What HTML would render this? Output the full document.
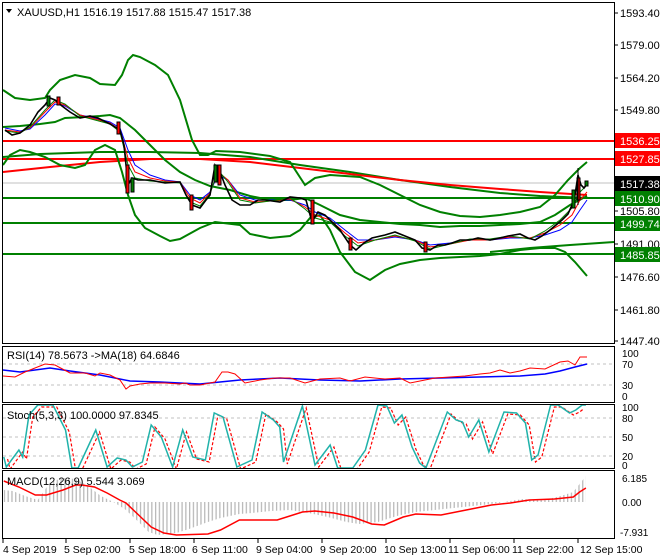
<!DOCTYPE html>
<html><head><meta charset="utf-8"><style>
html,body{margin:0;padding:0;background:#fff;}
svg{display:block;font-family:"Liberation Sans",sans-serif;font-size:11px;}
</style></head><body>
<svg width="660" height="560" viewBox="0 0 660 560" xmlns="http://www.w3.org/2000/svg">
<defs>
<pattern id="hist" width="3" height="10" patternUnits="userSpaceOnUse"><rect x="0" y="0" width="1" height="10" fill="#b8b8b8"/></pattern>
</defs>
<rect width="660" height="560" fill="#fff"/>
<!-- main panel -->
<g fill="none">
<!-- grey current price line -->
<line x1="3" y1="183" x2="614" y2="183" stroke="#c0c0c0" stroke-width="1"/>
<!-- horizontal levels -->
<line x1="3" y1="141" x2="614" y2="141" stroke="#ff0000" stroke-width="2"/>
<line x1="3" y1="159" x2="614" y2="159" stroke="#ff0000" stroke-width="2"/>
<line x1="3" y1="198" x2="614" y2="198" stroke="#008000" stroke-width="2"/>
<line x1="3" y1="223" x2="614" y2="223" stroke="#008000" stroke-width="2"/>
<line x1="3" y1="254" x2="614" y2="254" stroke="#008000" stroke-width="2"/>
<!-- trend line -->
<polyline points="490,252 530,248 570,245 614,242" stroke="#008000" stroke-width="2"/>
<!-- slow green MA -->
<polyline points="3,157 40,154 100,152 150,152 200,153 250,157 300,165 350,172 400,180 450,187 500,193 540,196 587,198" stroke="#008000" stroke-width="2"/>
<!-- slow red MA -->
<polyline points="3,172 50,167 100,162 150,159 200,159 250,162 300,168 350,174 400,180 450,185 500,189 540,192 587,195" stroke="#ff0000" stroke-width="2"/>
<!-- upper band -->
<polyline points="3,90 15,98 30,100 45,98 50,90 60,80 75,75 90,78 100,84 115,85 122,75 128,60 133,55 140,57 155,65 168,75 180,100 192,140 200,155 208,155 216,151 240,152 270,156 290,162 305,185 315,178 330,175 360,177 380,185 400,195 420,205 440,212 460,216 480,217 500,215 520,212 540,207 555,195 568,180 580,168 587,162" stroke="#008000" stroke-width="2"/>
<!-- middle band -->
<polyline points="3,127 20,126 40,124 55,122 65,118 85,117 100,116 110,115 120,118 135,130 150,145 165,160 180,172 195,180 210,186 230,190 250,196 270,200 290,200 305,198 320,205 340,215 360,220 380,222 400,224 420,225 440,227 460,226 480,226 500,225 520,224 540,222 555,215 570,205 587,196" stroke="#008000" stroke-width="2"/>
<!-- lower band -->
<polyline points="3,165 10,155 20,150 30,152 45,157 60,165 75,168 85,165 95,150 105,145 115,150 122,172 128,195 135,215 145,228 160,236 170,241 180,239 200,228 215,222 240,225 250,234 270,238 290,236 300,230 310,218 320,215 330,230 340,252 355,272 370,280 385,270 400,264 420,260 440,258 460,257 480,256 500,254 520,250 540,248 555,248 565,252 575,262 587,276" stroke="#008000" stroke-width="2"/>
<!-- small MAs -->
<polyline points="5,128 20,131 30,129 45,115 55,104 65,106 80,115 95,118 110,122 120,128 128,150 135,165 150,175 165,180 180,182 190,195 200,200 210,192 218,175 228,180 240,195 255,200 270,200 290,200 305,205 315,212 330,218 345,230 358,240 375,240 395,237 415,240 430,245 450,243 470,240 490,240 510,238 530,238 545,235 560,230 572,222 580,210 587,200" stroke="#0000ff" stroke-width="1"/>
<polyline points="5,130 20,132 30,128 45,112 55,102 65,105 80,115 95,119 110,123 120,130 128,158 135,172 150,178 165,181 180,182 190,198 200,203 210,193 218,172 228,180 240,198 255,202 270,201 290,199 305,207 315,215 330,220 345,233 358,243 375,240 395,236 415,240 430,247 450,244 470,240 490,240 510,237 530,238 545,233 560,225 572,215 580,200 587,192" stroke="#ff0000" stroke-width="1"/>
<polyline points="5,131 20,133 30,127 45,110 55,100 65,104 80,116 95,120 110,124 120,132 128,165 135,178 150,181 165,182 180,183 190,202 200,206 210,194 218,170 228,182 240,200 255,203 270,201 290,198 305,209 315,218 330,222 345,236 358,246 375,240 395,235 415,241 430,249 450,244 470,239 490,239 510,236 530,239 545,231 560,220 572,208 580,192 587,185" stroke="#008000" stroke-width="1"/>
<!-- price -->
<polyline points="5,130 12,135 20,133 30,125 38,112 45,105 50,98 55,100 62,106 70,112 80,118 90,116 98,118 110,124 120,130 124,145 128,185 132,178 138,180 150,180 165,183 180,182 186,195 192,205 200,208 206,200 210,195 215,165 220,172 225,185 232,200 240,205 250,205 258,200 265,200 280,202 290,197 300,198 306,200 312,222 318,212 325,215 335,225 340,230 350,245 356,250 364,243 372,238 385,235 395,232 405,236 415,240 422,248 430,250 438,245 445,245 452,243 460,240 470,240 478,238 490,240 500,238 508,236 520,234 528,238 535,240 542,236 550,230 556,225 562,220 568,214 572,205 575,195 578,175 581,185 584,188 587,184" stroke="#000" stroke-width="1.6"/>
<!-- a few candle bodies -->
<g stroke="#000" stroke-width="1">
<rect x="47" y="96" width="3" height="10" fill="#008000"/>
<rect x="57" y="97" width="3" height="8" fill="#ff0000"/>
<rect x="117" y="122" width="3" height="12" fill="#ff0000"/>
<rect x="126" y="165" width="3" height="28" fill="#ff0000"/>
<rect x="131" y="178" width="3" height="14" fill="#008000"/>
<rect x="190" y="195" width="3" height="15" fill="#ff0000"/>
<rect x="214" y="165" width="3" height="17" fill="#008000"/>
<rect x="218" y="165" width="3" height="20" fill="#ff0000"/>
<rect x="311" y="200" width="3" height="24" fill="#ff0000"/>
<rect x="349" y="238" width="3" height="12" fill="#ff0000"/>
<rect x="424" y="242" width="3" height="10" fill="#ff0000"/>
<rect x="572" y="190" width="3" height="18" fill="#008000"/>
<rect x="577" y="178" width="3" height="22" fill="#ff0000"/>
<rect x="585" y="181" width="3" height="5" fill="#008000"/>
</g>
<line x1="578" y1="168" x2="578" y2="205" stroke="#000"/>
</g>
<rect x="2.5" y="2.5" width="612" height="341" fill="none" stroke="#000"/>
<text x="17" y="16" fill="#000">XAUUSD,H1  1516.19 1517.88 1515.47 1517.38</text>
<polygon points="6,9 12,9 9,13" fill="#000"/>

<!-- price axis -->
<g fill="#000">
<text x="620" y="17">1593.40</text><text x="620" y="49">1579.00</text><text x="620" y="82">1564.20</text><text x="620" y="114">1549.80</text>
<text x="620" y="204" visibility="hidden">x</text>
<text x="620" y="215">1505.80</text><text x="620" y="248">1491.00</text><text x="620" y="281">1476.60</text><text x="620" y="314">1461.80</text><text x="620" y="345">1447.40</text>
</g>
<g stroke="#000"><line x1="614" y1="13" x2="618" y2="13"/><line x1="614" y1="45" x2="618" y2="45"/><line x1="614" y1="78" x2="618" y2="78"/><line x1="614" y1="110" x2="618" y2="110"/><line x1="614" y1="211" x2="618" y2="211"/><line x1="614" y1="244" x2="618" y2="244"/><line x1="614" y1="277" x2="618" y2="277"/><line x1="614" y1="310" x2="618" y2="310"/><line x1="614" y1="341" x2="618" y2="341"/></g>
<rect x="615" y="133" width="45" height="15" fill="#ff0000"/><text x="620" y="145" fill="#fff">1536.25</text>
<rect x="615" y="151" width="45" height="15" fill="#ff0000"/><text x="620" y="163" fill="#fff">1527.85</text>
<rect x="615" y="176" width="45" height="15" fill="#000"/><text x="620" y="188" fill="#fff">1517.38</text>
<rect x="615" y="191" width="45" height="15" fill="#008000"/><text x="620" y="203" fill="#fff">1510.90</text>
<rect x="615" y="216" width="45" height="15" fill="#008000"/><text x="620" y="228" fill="#fff">1499.74</text>
<rect x="615" y="247" width="45" height="15" fill="#008000"/><text x="620" y="259" fill="#fff">1485.85</text>

<!-- RSI panel -->
<g fill="none" stroke="#c0c0c0" stroke-dasharray="3,3"><line x1="3" y1="364" x2="614" y2="364"/><line x1="3" y1="385" x2="614" y2="385"/></g>
<polyline fill="none" stroke="#0000ff" stroke-width="1.5" points="3,370 20,372 50,368 70,371 100,375 130,381 160,382 200,384 240,380 280,378 320,380 360,381 400,379 440,378 480,377 520,376 545,374 560,371 575,367 587,364"/>
<polyline fill="none" stroke="#ff0000" stroke-width="1" points="3,376 15,377 25,372 35,368 45,364 55,365 70,373 85,373 95,376 100,373 110,375 120,380 126,389 130,386 140,384 150,383 165,383 180,384 185,383 190,385 200,385 215,382 222,372 228,372 235,374 245,383 260,380 275,378 290,378 305,383 320,379 340,378 350,381 365,377 385,379 400,378 410,383 420,381 435,378 450,377 465,376 480,374 490,373 500,370 510,373 520,371 530,368 545,369 560,362 568,361 575,365 580,357 587,357"/>
<rect x="2.5" y="346.5" width="612" height="56" fill="none" stroke="#000"/>
<text x="7" y="359">RSI(14) 78.5673  -&gt;MA(18) 64.6846</text>
<g font-size="10"><text x="622" y="357">100</text><text x="622" y="368">70</text><text x="622" y="389">30</text><text x="622" y="400">0</text></g>

<!-- Stoch panel -->
<g fill="none" stroke="#c0c0c0" stroke-dasharray="3,3"><line x1="3" y1="418" x2="614" y2="418"/><line x1="3" y1="437" x2="614" y2="437"/><line x1="3" y1="456" x2="614" y2="456"/></g>
<g transform="scale(1.26,1)">
<polyline fill="none" stroke="#ff0000" stroke-width="1.2" stroke-dasharray="3,2" vector-effect="non-scaling-stroke" transform="translate(3,2)" points="3,457 5,467 15,450 18,457 23,415 30,405 42,405 52,430 57,468 62,468 76,430 85,467 93,458 100,460 105,467 113,462 120,425 128,437 137,467 145,430 153,457 163,460 170,413 177,417 188,467 200,460 208,412 217,420 222,427 225,462 240,406 250,465 262,445 268,468 280,468 290,450 300,405 307,406 313,423 319,415 327,447 333,463 338,468 355,412 362,420 367,422 372,437 380,420 388,452 400,412 410,413 417,423 422,460 427,455 437,405 443,405 452,413 457,410 460,407"/>
<polyline fill="none" stroke="#20b2aa" stroke-width="1.5" vector-effect="non-scaling-stroke" points="3,457 5,467 15,450 18,457 23,415 30,405 42,405 52,430 57,468 62,468 76,430 85,467 93,458 100,460 105,467 113,462 120,425 128,437 137,467 145,430 153,457 163,460 170,413 177,417 188,467 200,460 208,412 217,420 222,427 225,462 240,406 250,465 262,445 268,468 280,468 290,450 300,405 307,406 313,423 319,415 327,447 333,463 338,468 355,412 362,420 367,422 372,437 380,420 388,452 400,412 410,413 417,423 422,460 427,455 437,405 443,405 452,413 457,410 462,405 465,405"/>
</g>
<rect x="0" y="469" width="614" height="1" fill="#fff"/>
<rect x="2.5" y="404.5" width="612" height="64" fill="none" stroke="#000"/>
<text x="7" y="419">Stoch(5,3,3) 100.0000 97.8345</text>
<g font-size="10"><text x="622" y="411">100</text><text x="622" y="422">80</text><text x="622" y="441">50</text><text x="622" y="460">20</text><text x="622" y="469">0</text></g>

<!-- MACD panel -->
<g transform="scale(1.26,1)">
<polygon fill="url(#hist)" points="3,490 10,491 20,496 30,500 40,482 50,478 60,479 70,486 80,496 90,502 100,510 110,522 118,532 125,535 140,533 150,529 165,522 175,518 190,514 200,513 215,511 230,510 245,513 260,517 275,522 285,524 300,522 315,516 330,512 345,510 360,508 375,506 390,504 405,501 415,499 425,500 435,499 445,496 455,492 460,484 465,476 465,502 3,502"/>
<polyline fill="none" stroke="#ff0000" stroke-width="1.5" vector-effect="non-scaling-stroke" points="3,481 15,487 28,495 37,495 50,490 60,485 65,485 75,487 85,493 95,500 100,503 110,515 120,527 130,533 140,535 165,534 175,530 190,520 200,520 220,520 240,512 250,511 265,513 280,517 295,524 305,525 320,517 330,514 350,515 370,510 390,505 405,503 420,500 440,499 455,497 460,492 465,488"/>
</g>
<rect x="2.5" y="470.5" width="612" height="68" fill="none" stroke="#000"/>
<rect x="3" y="473" width="120" height="14" fill="#fff" opacity="0"/>
<text x="7" y="485">MACD(12,26,9) 5.544 3.069</text>
<g font-size="10"><text x="622" y="482">6.185</text><text x="622" y="506">0.00</text><text x="620" y="536">-7.931</text></g>

<!-- time axis -->
<g stroke="#000"><line x1="3" y1="539" x2="3" y2="543"/><line x1="66" y1="539" x2="66" y2="543"/><line x1="130" y1="539" x2="130" y2="543"/><line x1="194" y1="539" x2="194" y2="543"/><line x1="258" y1="539" x2="258" y2="543"/><line x1="322" y1="539" x2="322" y2="543"/><line x1="386" y1="539" x2="386" y2="543"/><line x1="450" y1="539" x2="450" y2="543"/><line x1="514" y1="539" x2="514" y2="543"/><line x1="578" y1="539" x2="578" y2="543"/></g>
<g font-size="10.5"><text x="3" y="553">4 Sep 2019</text><text x="64" y="553">5 Sep 02:00</text><text x="129" y="553">5 Sep 18:00</text><text x="192" y="553">6 Sep 11:00</text><text x="256" y="553">9 Sep 04:00</text><text x="320" y="553">9 Sep 20:00</text><text x="384" y="553">10 Sep 13:00</text><text x="448" y="553">11 Sep 06:00</text><text x="512" y="553">11 Sep 22:00</text><text x="580" y="553">12 Sep 15:00</text></g>
</svg>
</body></html>
